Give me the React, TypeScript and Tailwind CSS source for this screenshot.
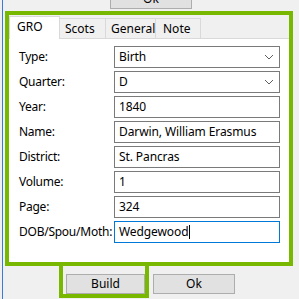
import React from "react";

const font = { fontFamily: '"Noto Sans", "Open Sans", sans-serif' };

type Field = { label: string; value: string; combo?: boolean; focused?: boolean };

const fields: Field[] = [
  { label: "Type:", value: "Birth", combo: true },
  { label: "Quarter:", value: "D", combo: true },
  { label: "Year:", value: "1840" },
  { label: "Name:", value: "Darwin, William Erasmus" },
  { label: "District:", value: "St. Pancras" },
  { label: "Volume:", value: "1" },
  { label: "Page:", value: "324" },
  { label: "DOB/Spou/Moth:", value: "Wedgewood", focused: true },
];

function Chevron() {
  return (
    <svg width="10" height="6" viewBox="0 0 10 6" className="shrink-0">
      <polyline points="1,1 5,5 9,1" fill="none" stroke="#606060" strokeWidth="1" />
    </svg>
  );
}

function Row({ f }: { f: Field }) {
  return (
    <div className="flex items-center h-[22px]">
      <div className="w-[95px] shrink-0 whitespace-nowrap tracking-[-0.25px] text-[12px] text-black">
        {f.label}
      </div>
      <div
        className={
          "w-[166px] h-[22px] bg-white flex items-center pl-[4px] pr-[5px] text-[12px] text-black border " +
          (f.focused ? "border-[#0078d7]" : "border-[#7a7a7a]")
        }
      >
        <span className="flex-1 flex items-center whitespace-nowrap tracking-[-0.1px]">
          {f.value}
          {f.focused && <span className="inline-block w-px h-[14px] bg-black ml-px" />}
        </span>
        {f.combo && <Chevron />}
      </div>
    </div>
  );
}

const tabs = [
  { name: "Scots", cls: "w-[47px] pl-[5px]" },
  { name: "General", cls: "w-[51px] pl-[5px]" },
  { name: "Note", cls: "w-[46px] pl-[7px]" },
];

export default function App() {
  return (
    <div className="flex w-[299px] h-[299px] bg-[#f0f0f0] overflow-hidden" style={font}>
      <div className="w-[2px] shrink-0" />
      <div className="w-px shrink-0 bg-[#3a7bd5]" />
      <div className="flex flex-col pl-[2px]">
        {/* top dialog button, mostly scrolled off */}
        <div className="h-[11px] pl-[105px] flex items-end">
          <button className="shrink-0 mb-[2px] w-[82px] h-[20px] bg-[#e1e1e1] border border-[#adadad] text-[12px] text-black">
            Ok
          </button>
        </div>

        {/* highlighted tab control */}
        <div className="w-[288px] h-[255px] border-4 border-[#78b800] flex flex-col">
          <div className="h-[23px] flex items-end shrink-0">
            <div className="relative z-10 w-[51px] h-[23px] -mb-px bg-white border border-b-0 border-[#d9d9d9] flex items-center pl-[7px] pb-[3px] text-[12px] text-black">
              GRO
            </div>
            {tabs.map((t) => (
              <div
                key={t.name}
                className={
                  t.cls +
                  " h-[20px] -ml-px border border-b-0 border-[#d9d9d9] bg-[#f0f0f0] flex items-center text-[12px] text-black"
                }
              >
                {t.name}
              </div>
            ))}
          </div>
          <div className="flex-1 bg-white border-t border-[#d9d9d9] pt-[7px] pl-[10px] flex flex-col gap-[3px]">
            {fields.map((f) => (
              <Row key={f.label} f={f} />
            ))}
          </div>
        </div>

        {/* bottom buttons */}
        <div className="flex items-start">
          <div className="ml-[54px] w-[90px] h-[32px] border-4 border-t-0 border-[#78b800] pl-[3px] pt-[4px]">
            <button className="w-[79px] h-[20px] bg-[#e1e1e1] border border-[#adadad] text-[12px] text-black">
              Build
            </button>
          </div>
          <button className="ml-[4px] mt-[8px] w-[82px] h-[20px] bg-[#e1e1e1] border border-[#adadad] text-[12px] text-black">
            Ok
          </button>
        </div>
      </div>
    </div>
  );
}
